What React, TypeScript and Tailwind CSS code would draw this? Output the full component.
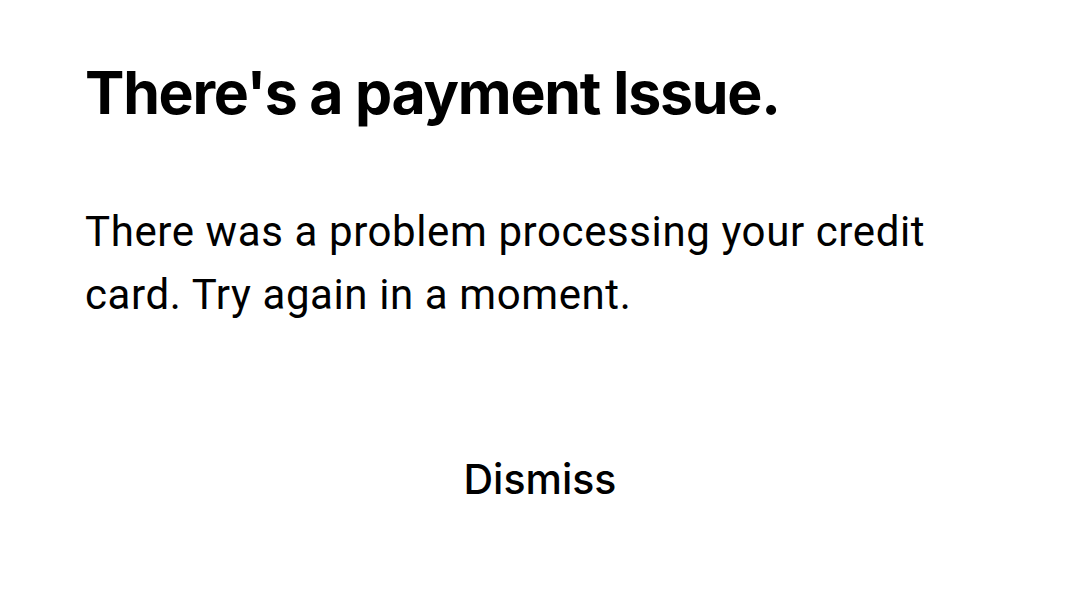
import React from 'react';

const App: React.FC = () => {
  return (
    <div className="w-[1080px] h-[610px] bg-white text-black flex flex-col" style={{ fontFamily: 'Inter, "Liberation Sans", sans-serif' }}>
      <div className="px-[85px] pt-[57px]">
        <h1 className="text-[59px] leading-[72px] font-bold tracking-[-1.25px]">There's a payment Issue.</h1>
        <p className="mt-[71px] max-w-[870px] text-[42px] leading-[63px] font-normal tracking-[0.6px]" style={{ fontFamily: 'Roboto, sans-serif' }}>
          There was a problem processing your credit card. Try again in a moment.
        </p>
      </div>
      <div className="mt-[128px] flex justify-center">
        <button className="text-[41px] font-medium leading-[50px] tracking-[0px]">Dismiss</button>
      </div>
    </div>
  );
};

export default App;
